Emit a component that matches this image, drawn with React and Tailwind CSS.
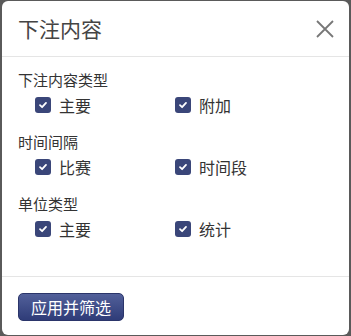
import React, { useState } from 'react';

const groups = [
  { title: '下注内容类型', items: ['主要', '附加'] },
  { title: '时间间隔', items: ['比赛', '时间段'] },
  { title: '单位类型', items: ['主要', '统计'] },
];

const Check = ({ checked, onClick, label }) => (
  <button type="button" onClick={onClick} className="flex items-center gap-2 w-[140px] h-6 text-left">
    <span
      className={`flex items-center justify-center w-4 h-4 rounded-[3px] ${
        checked ? 'bg-[#3a4679]' : 'bg-white border border-[#9aa0b5]'
      }`}
    >
      {checked && (
        <svg width="10" height="10" viewBox="0 0 10 10" fill="none">
          <path d="M2 5.2 L4.1 7.2 L8 2.9" stroke="white" strokeWidth="1.8" strokeLinecap="round" strokeLinejoin="round" />
        </svg>
      )}
    </span>
    <span className="text-[16px] leading-6 text-[#333]">{label}</span>
  </button>
);

export default function App() {
  const [checked, setChecked] = useState(
    groups.map((g) => g.items.map(() => true))
  );

  const toggle = (gi, ii) => {
    setChecked((prev) =>
      prev.map((row, r) => (r === gi ? row.map((v, c) => (c === ii ? !v : v)) : row))
    );
  };

  return (
    <div
      className="w-[351px] h-[336px] bg-[#5a5a5a] px-[2px] py-[1px]"
      style={{ fontFamily: '"Noto Sans CJK SC", "Liberation Sans", sans-serif' }}
    >
      <div className="h-full bg-white rounded-md flex flex-col">
        <div className="h-[56px] flex items-center justify-between pl-4 pr-[15px] border-b border-[#e5e5e5]">
          <h2 className="text-[21px] text-[#444] leading-none">下注内容</h2>
          <button type="button" className="w-[18px] h-[18px] flex items-center justify-center">
            <svg width="18" height="18" viewBox="0 0 18 18" fill="none">
              <path d="M1 1 L17 17 M17 1 L1 17" stroke="#777" strokeWidth="1.8" />
            </svg>
          </button>
        </div>

        <div className="pt-[13px] pb-[35px] pl-4 border-b border-[#e5e5e5]">
          {groups.map((g, gi) => (
            <div key={g.title} className={gi < groups.length - 1 ? 'mb-[15px]' : ''}>
              <div className="h-5 text-[15px] leading-5 text-[#333]">{g.title}</div>
              <div className="flex pl-[17px] mt-[3px]">
                {g.items.map((it, ii) => (
                  <Check key={it} label={it} checked={checked[gi][ii]} onClick={() => toggle(gi, ii)} />
                ))}
              </div>
            </div>
          ))}
        </div>

        <div className="pt-4 pl-4">
          <button
            type="button"
            className="h-7 w-[106px] rounded-[5px] border border-[#2b356a] bg-gradient-to-b from-[#52609a] to-[#2f3c78] text-white text-[16px] leading-none"
          >
            应用并筛选
          </button>
        </div>
      </div>
    </div>
  );
}
